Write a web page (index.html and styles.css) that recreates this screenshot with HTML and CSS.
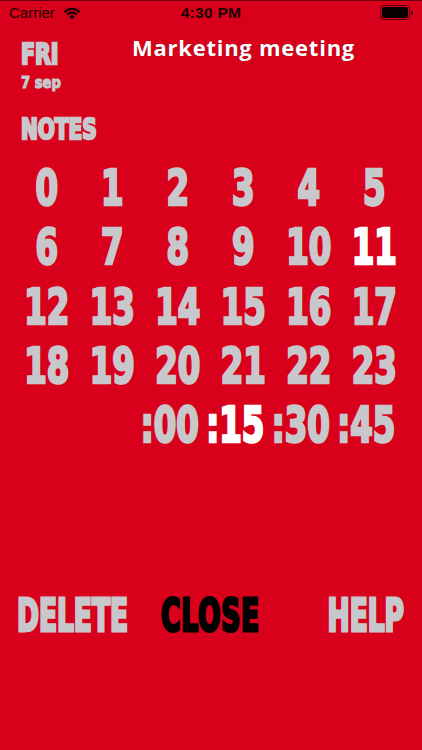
FILE: index.html
```html
<!DOCTYPE html>
<html>
<head>
<meta charset="utf-8">
<link rel="stylesheet" href="styles.css">
</head>
<body>
<div class="screen">
  <div class="status">
    <div class="status-left">
      <span class="carrier">Carrier</span>
      <svg class="wifi" viewBox="0 0 20 14" width="20" height="14">
        <path d="M10 13.6 L7.1 10.7 A4.1 4.1 0 0 1 12.9 10.7 Z" fill="#1a0003"/>
        <path d="M5.1 8.6 A6.9 6.9 0 0 1 14.9 8.6" fill="none" stroke="#1a0003" stroke-width="2.3"/>
        <path d="M2.5 6.1 A10.5 10.5 0 0 1 17.5 6.1" fill="none" stroke="#1a0003" stroke-width="2.3"/>
      </svg>
    </div>
    <div class="clock">4:30 PM</div>
    <div class="status-right">
      <div class="battery"><div class="battery-fill"></div></div>
      <div class="battery-nub"></div>
    </div>
  </div>

  <div class="header">
    <div class="date">
      <div class="day">FRI</div>
      <div class="dm">7 sep</div>
    </div>
    <div class="title">Marketing meeting</div>
  </div>

  <div class="notes">NOTES</div>

  <div class="grid">
    <div class="cell">0</div><div class="cell">1</div><div class="cell">2</div><div class="cell">3</div><div class="cell">4</div><div class="cell">5</div>
    <div class="cell">6</div><div class="cell">7</div><div class="cell">8</div><div class="cell">9</div><div class="cell">10</div><div class="cell selected">11</div>
    <div class="cell">12</div><div class="cell">13</div><div class="cell">14</div><div class="cell">15</div><div class="cell">16</div><div class="cell">17</div>
    <div class="cell">18</div><div class="cell">19</div><div class="cell">20</div><div class="cell">21</div><div class="cell">22</div><div class="cell">23</div>
    <div class="cell min first">:00</div><div class="cell min selected">:15</div><div class="cell min">:30</div><div class="cell min">:45</div>
  </div>

  <div class="actions">
    <div class="btn left">DELETE</div>
    <div class="btn center close">CLOSE</div>
    <div class="btn right">HELP</div>
  </div>
</div>
</body>
</html>
```
FILE: styles.css
```css
html, body {
  margin: 0;
  padding: 0;
}
body {
  background: #d8001b;
}
.screen {
  width: 422px;
  height: 750px;
  background: #d8001b;
  overflow: hidden;
  font-family: "DejaVu Sans Condensed", "DejaVu Sans", sans-serif;
  font-weight: 700;
  color: #c8c8cc;
}
.status {
  height: 23px;
  border-top: 1px solid #6a000c;
  display: flex;
  align-items: center;
  justify-content: space-between;
  padding: 0 9px;
  font-family: "Liberation Sans", Arial, sans-serif;
  font-size: 15px;
  color: #1a0003;
}
.status-left {
  display: flex;
  align-items: center;
  gap: 7px;
  width: 120px;
}
.carrier {
  font-weight: 400;
}
.wifi {
  display: block;
}
.clock {
  font-weight: 700;
  font-size: 15.5px;
  letter-spacing: 0.3px;
}
.status-right {
  width: 120px;
  display: flex;
  justify-content: flex-end;
  align-items: center;
}
.battery {
  width: 26px;
  height: 11px;
  border: 1px solid #5a0008;
  border-radius: 3px;
  padding: 1px;
  box-sizing: content-box;
}
.battery-fill {
  width: 100%;
  height: 100%;
  background: #0a0000;
  border-radius: 2px;
}
.battery-nub {
  width: 2px;
  height: 4px;
  background: #5a0008;
  border-radius: 0 1px 1px 0;
  margin-left: 1px;
}

/* heavy condensed display text */
.day, .notes, .cell, .btn {
  -webkit-text-stroke: 2px currentColor;
}

.header {
  display: flex;
  align-items: flex-start;
  padding: 19px 6px 0 21px;
}
.date {
  width: 50px;
}
.day {
  font-size: 22.7px;
  line-height: 26px;
  transform: scaleY(1.21);
  transform-origin: 50% 20.85px;
}
.dm {
  font-size: 14.6px;
  line-height: 18px;
  margin-top: 4.9px;
  -webkit-text-stroke: 1px currentColor;
  transform: scaleY(1.13);
  transform-origin: 50% 14px;
}
.title {
  flex: 1;
  text-align: center;
  font-family: "Open Sans", "DejaVu Sans", sans-serif;
  font-weight: 700;
  font-size: 22px;
  line-height: 22px;
  letter-spacing: 0.75px;
  color: #ffffff;
  text-shadow: 0 0 1px rgba(60, 0, 0, 0.6);
  margin-top: -7px;
}
.notes {
  padding-left: 21px;
  font-size: 22.3px;
  line-height: 26px;
  margin-top: 26.5px;
  transform: scaleY(1.29);
  transform-origin: 50% 20.7px;
}
.grid {
  display: grid;
  grid-template-columns: repeat(6, 65.5px);
  grid-auto-rows: 59.25px;
  padding-left: 14px;
  margin-top: 18.8px;
}
.cell {
  text-align: center;
  font-size: 36px;
  line-height: 59.25px;
  transform: scaleY(1.36);
  transform-origin: 50% 42.1px;
}
.cell.min {
  margin-left: -12px;
  margin-right: 4px;
}
.cell.first {
  grid-column-start: 3;
}
.cell.selected {
  color: #ffffff;
}
.actions {
  display: grid;
  grid-template-columns: 1fr 1fr 1fr;
  padding: 0 18px 0 17px;
  margin-top: 147.3px;
}
.btn {
  font-size: 29.4px;
  line-height: 29.4px;
  transform: scaleY(1.5);
  transform-origin: 50% 24.9px;
}
.btn.left {
  text-align: left;
}
.btn.center {
  text-align: center;
}
.btn.right {
  text-align: right;
}
.btn.close {
  color: #000000;
  letter-spacing: 0.8px;
}
```
